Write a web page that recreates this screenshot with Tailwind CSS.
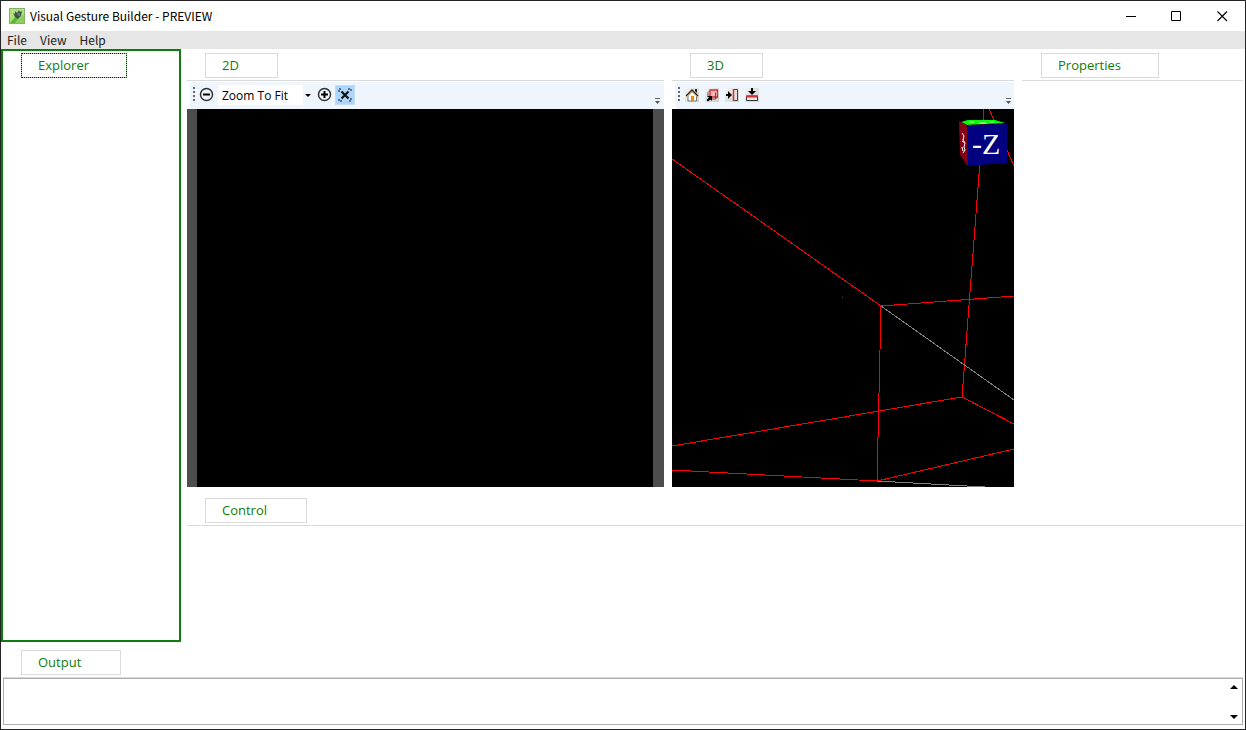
<!DOCTYPE html>
<html lang="en">
<head>
    <meta charset="UTF-8">
    <meta name="viewport" content="width=device-width, initial-scale=1.0">
    <title>Visual Gesture Builder - PREVIEW</title>
    <script src="https://cdn.jsdelivr.net/npm/@tailwindcss/browser@4"></script>
</head>
<body class="flex h-screen flex-col border border-[#242424] bg-white font-['Noto_Sans_CJK_KR','Noto_Sans',sans-serif] text-black">
<!-- Title bar -->
<header class="flex h-[30px] shrink-0 items-center pl-2">
    <svg class="size-4" viewBox="0 0 16 16">
        <rect x=".5" y=".5" width="15" height="15" fill="#8fce5a" stroke="#7fb56a"/>
        <path d="M1 1h14v5L6 15H1z" fill="#b5e07e"/>
        <path d="M1 15 7 8l3 2-4 5z" fill="#5cb531"/>
        <path d="M4 5 6 6 6 3 8 5 10 2 11 4 13 3 12 8 9 11 6 9z" fill="#3d5546"/>
        <path d="M8 5h3v3H9z" fill="#63788a"/>
    </svg>
    <h1 class="ml-[5px] text-xs">Visual Gesture Builder - PREVIEW</h1>
    <div class="ml-auto flex h-full">
        <button aria-label="Minimize" class="flex w-[45px] items-center justify-center">
            <svg class="size-[11px]" viewBox="0 0 11 11"><path d="M0 5.5h10" stroke="#000"/></svg>
        </button>
        <button aria-label="Maximize" class="flex w-[45px] items-center justify-center">
            <svg class="size-[11px]" viewBox="0 0 11 11"><path d="M.5 .5h9v9h-9z" fill="none" stroke="#000"/></svg>
        </button>
        <button aria-label="Close" class="flex w-[46px] items-center justify-center">
            <svg class="size-[11px]" viewBox="0 0 11 11"><path d="M.5 .5l9.500 9.500M10 .5l-9.500 9.500" stroke="#000" stroke-width="1.1"/></svg>
        </button>
    </div>
</header>

<!-- Menu -->
<nav class="flex h-[18px] shrink-0 items-center gap-[13px] bg-[#e6e6e6] pl-[6px] text-xs text-[#212121]">
    <button>File</button>
    <button>View</button>
    <button>Help</button>
</nav>

<main class="flex min-h-0 flex-1 gap-[6px] pr-[2px]">
    <!-- Explorer -->
    <section class="w-[180px] shrink-0 border-2 border-[#107c10] px-[18px] pt-[2px]">
        <button class="flex h-[25px] w-[106px] items-center border border-dotted border-black pl-4 font-['Open_Sans',sans-serif] text-[13px] text-[#107c10] outline outline-1 -outline-offset-1 outline-[#107c10]/40">Explorer</button>
    </section>

    <div class="flex min-w-0 flex-1 flex-col">
        <div class="grid min-h-0 flex-1 grid-cols-[477fr_342fr_221fr] gap-2">
            <!-- 2D view -->
            <section class="flex min-w-0 flex-col">
                <div class="h-8 shrink-0 border-b border-[#dadada] pt-1 pl-[18px]">
                    <button class="flex h-[25px] w-[73px] items-center border border-[#dadada] pl-4 font-['Open_Sans',sans-serif] text-[13px] text-[#107c10]">2D</button>
                </div>
                <div class="mt-px ml-[3px] flex h-[27px] shrink-0 items-center rounded-l-sm bg-[#eef5fd] pr-1 pb-[2px] pl-[3px]">
                    <svg class="h-4 w-[2px]" viewBox="0 0 2 16"><path d="M1 0v16" stroke="#666" stroke-width="2" stroke-dasharray="2 2"/></svg>
                    <button aria-label="Zoom out" class="ml-1">
                        <svg class="block size-[15px]" viewBox="0 0 15 15"><circle cx="7.500" cy="7.500" r="6" fill="none" stroke="#333" stroke-width="1.500"/><path d="M4 7.500h7" stroke="#000" stroke-width="2"/></svg>
                    </button>
                    <div class="relative ml-1 h-5 w-24">
                        <select aria-label="Zoom" class="block h-5 w-full appearance-none bg-white pt-[3px] pl-1 font-['Open_Sans',sans-serif] text-xs leading-4">
                            <option>Zoom To Fit</option>
                        </select>
                        <svg class="pointer-events-none absolute top-0 right-0 h-5 w-[11px] bg-[#eef5fd]" viewBox="0 0 11 20"><path d="M2 9h6l-3 3z"/></svg>
                    </div>
                    <button aria-label="Zoom in" class="ml-[3px]">
                        <svg class="block size-[15px]" viewBox="0 0 15 15"><circle cx="7.500" cy="7.500" r="6" fill="none" stroke="#333" stroke-width="1.500"/><path d="M4 7.500h7M7.500 4v7" stroke="#000" stroke-width="2"/></svg>
                    </button>
                    <button aria-label="Zoom to fit" class="ml-[3px] flex size-5 items-center justify-center border border-[#c5dcf0] bg-[#aed5fb]">
                        <svg class="size-[14px]" viewBox="0 0 14 14"><path d="M3.500 3.500l7 7M10.500 3.500l-7 7" stroke="#111" stroke-width="2.200"/><path d="M1 4V1h3M10 1h3v3M13 10v3h-3M4 13H1v-3" fill="none" stroke="#3d566e" stroke-width="1.500" stroke-dasharray="2 1"/></svg>
                    </button>
                    <svg class="mt-[14px] ml-auto h-[7px] w-[5px]" viewBox="0 0 5 7"><path d="M0 .5h5" stroke="#666"/><path d="M0 3h5L2.500 6z" fill="#555"/></svg>
                </div>
                <div class="flex-1 border-r-[11px] border-l-[10px] border-[#4d4d4d] bg-black"></div>
            </section>

            <!-- 3D view -->
            <section class="flex min-w-0 flex-col">
                <div class="h-8 shrink-0 border-b border-[#dadada] pt-1 pl-[18px]">
                    <button class="flex h-[25px] w-[73px] items-center border border-[#dadada] pl-4 font-['Open_Sans',sans-serif] text-[13px] text-[#107c10]">3D</button>
                </div>
                <div class="mt-px ml-[3px] flex h-[27px] shrink-0 items-center rounded-l-sm bg-[#eef5fd] pr-[3px] pb-[2px] pl-[3px]">
                    <svg class="h-4 w-[2px]" viewBox="0 0 2 16"><path d="M1 0v16" stroke="#666" stroke-width="2" stroke-dasharray="2 2"/></svg>
                    <div class="ml-[5px] flex gap-[6px]">
                        <button aria-label="Home view" class="bg-linear-to-br from-[#f4f4f4] to-[#cfcfcf]">
                            <svg class="block size-[14px]" viewBox="0 0 14 14"><path d="M3 7.500 7 3.500l4.500 4V13H3z" fill="#fff" stroke="#777"/><path d="M1 8 7 2l6 6" fill="none" stroke="#222" stroke-width="1.300"/><path d="M1.500 9 7 3.500l5.500 5.500" fill="none" stroke="#e8a33a"/><path d="M10 1h2v4l-2-2z" fill="#222"/><path d="M6 8h3v5H6z" fill="#e88a10"/></svg>
                        </button>
                        <button aria-label="Front view" class="bg-linear-to-br from-[#f4f4f4] to-[#cfcfcf]">
                            <svg class="block size-[14px]" viewBox="0 0 14 14"><path d="M5 2h7.500v7H5z" fill="#f3b6b6" stroke="#d03030" stroke-width="1.300"/><path d="M5 2.500 3 4.500V9M5 11h5.500l2-2M10.500 4.500V11" fill="none" stroke="#8a4040"/><path d="M2 8h5v5L5.500 11.500 3 13.500 1.500 12 4 9.500z"/></svg>
                        </button>
                        <button aria-label="Side view" class="bg-linear-to-br from-[#f4f4f4] to-[#cfcfcf]">
                            <svg class="block size-[14px]" viewBox="0 0 14 14"><path d="M8.500 1.500h4v11h-4z" fill="#eedcdc" stroke="#444"/><path d="M8.500 1v12" stroke="#c03535" stroke-width="1.500"/><path d="M1 6h2V3l4 4-4 4V8H1z"/></svg>
                        </button>
                        <button aria-label="Top view" class="bg-linear-to-br from-[#f4f4f4] to-[#cfcfcf]">
                            <svg class="block size-[14px]" viewBox="0 0 14 14"><path d="M1.500 8h11v4.500h-11z" fill="#f5e5e5" stroke="#333"/><path d="M1 8.500h12" stroke="#d03030" stroke-width="2"/><path d="M6 0h2v3h3L7 7 3 3h3z"/></svg>
                        </button>
                    </div>
                    <svg class="mt-[14px] ml-auto h-[7px] w-[5px]" viewBox="0 0 5 7"><path d="M0 .5h5" stroke="#666"/><path d="M0 3h5L2.500 6z" fill="#555"/></svg>
                </div>
                <div class="min-h-0 flex-1 bg-black">
                    <svg class="size-full" viewBox="0 0 342 378" preserveAspectRatio="xMaxYMin slice">
                        <!-- Sensor frustum -->
                        <g fill="none" stroke="#f00" shape-rendering="crispEdges">
                            <path d="M0 50 209 197 342 187M209 197 205 372 0 361M205 372 342 340"/>
                            <path d="M312 0 290 288 0 337M290 288 342 315M317 0 342 57M170 188h1"/>
                            <path d="M209 197 342 291M205 372 313 378" stroke="#808080"/>
                        </g>
                        <!-- Orientation cube -->
                        <path d="M289 13 296 11h27l10 3-38 2z" fill="#0f0"/>
                        <path d="M287 12 295 16 296 57 288 46z" fill="#850014"/>
                        <path d="M295 16 335 15v39l-39 3z" fill="#000080"/>
                        <path d="M297 13h5M307 14h7M318 13h4" stroke="#dfd"/>
                        <path d="M290 24l2 3-1 4 2 3M290 32l3 2-1 4 1 3-2 3M290 38l1 4" fill="none" stroke="#fff"/>
                        <text x="300" y="45" fill="#fff" font-size="30" font-family="Liberation Serif, serif">-Z</text>
                    </svg>
                </div>
            </section>

            <!-- Properties -->
            <section class="min-w-0">
                <div class="h-8 border-b border-[#dadada] pt-1 pl-[19px]">
                    <button class="flex h-[25px] w-[118px] items-center border border-[#dadada] pl-4 font-['Open_Sans',sans-serif] text-[13px] text-[#107c10]">Properties</button>
                </div>
            </section>
        </div>

        <!-- Control -->
        <section class="h-[155px] shrink-0">
            <div class="mt-[7px] h-8 border-b border-[#dadada] pt-1 pl-[18px]">
                <button class="flex h-[25px] w-[102px] items-center border border-[#dadada] pl-4 font-['Open_Sans',sans-serif] text-[13px] text-[#107c10]">Control</button>
            </div>
        </section>
    </div>
</main>

<!-- Output -->
<section class="shrink-0 px-[2px] pt-2 pb-1">
    <button class="ml-[18px] flex h-[25px] w-[100px] items-center border border-[#dadada] pl-4 font-['Open_Sans',sans-serif] text-[13px] text-[#107c10]">Output</button>
    <div class="mt-[2px] border-t border-[#dadada]">
        <div class="flex h-[47px] border border-[#abadb3]">
            <textarea aria-label="Output" readonly class="flex-1 resize-none overflow-hidden text-xs outline-none"></textarea>
            <div class="flex w-[17px] flex-col items-center justify-between pt-[6px] pb-[5px]">
                <button aria-label="Scroll up"><svg class="block h-1 w-2" viewBox="0 0 8 4"><path d="M0 4 4 0l4 4z"/></svg></button>
                <button aria-label="Scroll down"><svg class="block h-1 w-2" viewBox="0 0 8 4"><path d="M0 0h8L4 4z"/></svg></button>
            </div>
        </div>
    </div>
</section>
</body>
</html>
